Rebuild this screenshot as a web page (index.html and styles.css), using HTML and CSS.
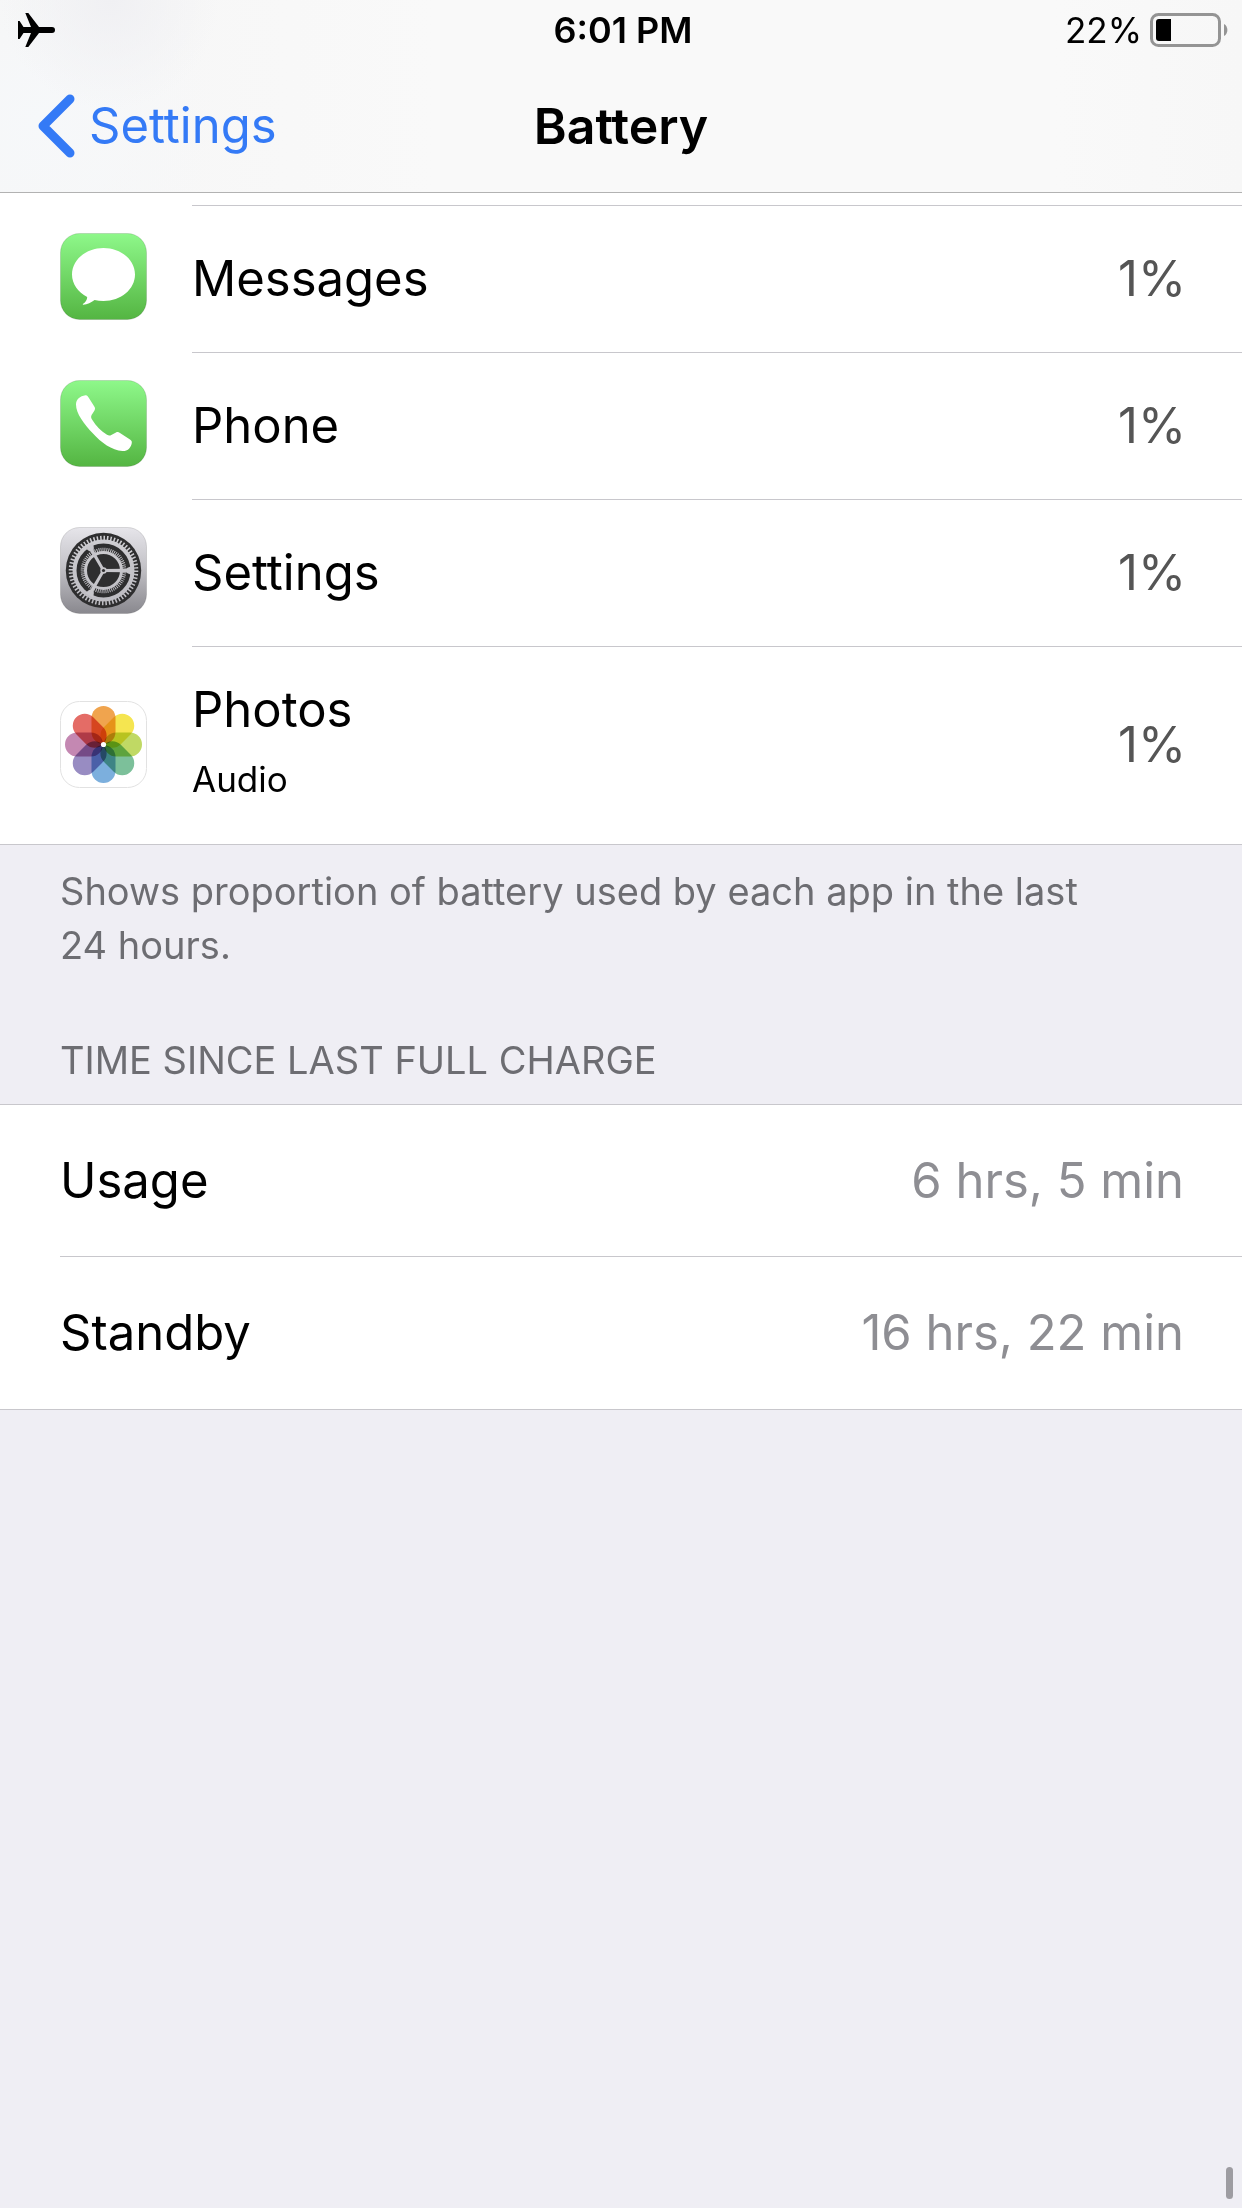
FILE: index.html
```
<!DOCTYPE html>
<html lang="en">
<head>
    <meta charset="UTF-8">
    <meta name="viewport" content="width=device-width, initial-scale=1.0">
    <title>Battery</title>
    <link rel="stylesheet" href="styles.css">
</head>
<body>
    <header class="top-bar">
        <div class="status-bar">
            <svg class="airplane" viewBox="0 0 37 34" aria-label="Airplane mode">
                <path d="M0 8H1.6L5.5 14H13L7.3 0H10.3L21 14H34A3 3 0 0 1 34 20H21L10.3 34H7.3L13 20H5.5L1.6 26H0Z"/>
            </svg>
            <span class="time">6:01 PM</span>
            <div class="power">
                <span>22%</span>
                <svg class="battery" viewBox="0 0 78 34" aria-hidden="true">
                    <rect x="1.5" y="1.5" width="68" height="31" rx="7" fill="none" stroke="#949494" stroke-width="3"/>
                    <path d="M9 6H21V28H9A3 3 0 0 1 6 25V9A3 3 0 0 1 9 6Z"/>
                    <path d="M74 11C78.5 13 78.5 21 74 23Z" fill="#949494"/>
                </svg>
            </div>
        </div>
        <nav class="nav-bar">
            <a class="back" href="#">
                <svg class="chevron" viewBox="0 0 38 64" aria-hidden="true">
                    <path d="M33 5L6 32L33 59" fill="none" stroke="#347af6" stroke-width="9" stroke-linecap="round" stroke-linejoin="round"/>
                </svg>
                Settings
            </a>
            <h1>Battery</h1>
        </nav>
    </header>

    <main>
        <ul class="list app-list">
            <li class="app">
                <svg class="app-icon" viewBox="0 0 87 87" aria-hidden="true">
                    <defs>
                        <linearGradient id="green" x1="0" y1="0" x2="0" y2="1">
                            <stop offset="0" stop-color="#8ef88a"/>
                            <stop offset="1" stop-color="#54b542"/>
                        </linearGradient>
                    </defs>
                    <rect x="0.5" y="0.5" width="86" height="86" rx="19" fill="url(#green)" stroke="#000" stroke-opacity="0.12"/>
                    <path d="M43.5 15C61 15 75 26.8 75 41.5S61 68 43.5 68C40.4 68 37.4 67.6 34.6 66.9C31 69.5 27.5 71.3 23.2 71.8C22.6 71.7 22.8 71.2 23.2 70.8C25.6 69 27.2 67 27.2 64C18 59.3 12 51 12 41.5C12 26.8 26 15 43.5 15Z" fill="#fff"/>
                </svg>
                <div class="row">
                    <span class="name">Messages</span>
                    <span class="percent">1%</span>
                </div>
            </li>
            <li class="app">
                <svg class="app-icon" viewBox="0 0 87 87" aria-hidden="true">
                    <rect x="0.5" y="0.5" width="86" height="86" rx="19" fill="url(#green)" stroke="#000" stroke-opacity="0.12"/>
                    <path d="M25.5 15.3C27 15 27.8 16.3 28.6 17.5L34.6 27C35.4 28.5 35 29.6 34.2 31L31.6 35C30.8 36.5 31 38 32.2 39.8C36 46 41 51 47 54.8C48.5 55.8 50 55.8 51.3 55L56 52.5C57.5 51.8 58.5 52 60 53L70 59.5C71.8 60.7 72.2 61.8 71.6 64C70 69 67.5 71.2 62.5 71C52 70.5 41 62.5 33 53.5C24 44 16 33.5 16 24.5C16 19.5 20 16 25.5 15.3Z" fill="#fff"/>
                </svg>
                <div class="row">
                    <span class="name">Phone</span>
                    <span class="percent">1%</span>
                </div>
            </li>
            <li class="app">
                <svg class="app-icon" viewBox="0 0 87 87" aria-hidden="true">
                    <defs>
                        <linearGradient id="metal" x1="0" y1="0" x2="0" y2="1">
                            <stop offset="0" stop-color="#e6e5ea"/>
                            <stop offset="0.45" stop-color="#c4c3c8"/>
                            <stop offset="1" stop-color="#89888e"/>
                        </linearGradient>
                        <linearGradient id="gear" gradientUnits="userSpaceOnUse" x1="0" y1="5" x2="0" y2="82">
                            <stop offset="0" stop-color="#d0cfd3"/>
                            <stop offset="1" stop-color="#bbbac0"/>
                        </linearGradient>
                    </defs>
                    <rect x="0.5" y="0.5" width="86" height="86" rx="19" fill="url(#metal)" stroke="#000" stroke-opacity="0.12"/>
                    <circle cx="43.5" cy="43.5" r="37.7" fill="#2e2e2f"/>
                    <g fill="none" stroke="url(#gear)">
                        <circle cx="43.5" cy="43.5" r="32.5" stroke-width="4.6" pathLength="120" stroke-dasharray="0.9 1.1"/>
                        <circle cx="43.5" cy="43.5" r="29" stroke-width="4"/>
                        <circle cx="43.5" cy="43.5" r="21" stroke-width="3.6" pathLength="132" stroke-dasharray="0.9 1.1"/>
                        <circle cx="43.5" cy="43.5" r="18" stroke-width="3"/>
                    </g>
                    <g fill="#c6c5ca">
                        <path id="spoke" d="M43.5 42.1L66 41.8L68 40.5L72 39V48L68 46.5L66 45.2L43.5 44.9Z"/>
                        <use href="#spoke" transform="rotate(120 43.5 43.5)"/>
                        <use href="#spoke" transform="rotate(240 43.5 43.5)"/>
                        <circle cx="43.5" cy="43.5" r="3.2"/>
                    </g>
                    <circle cx="43.5" cy="43.5" r="1.6" fill="#2e2e2f"/>
                </svg>
                <div class="row">
                    <span class="name">Settings</span>
                    <span class="percent">1%</span>
                </div>
            </li>
            <li class="app app-tall">
                <svg class="app-icon" viewBox="0 0 87 87" aria-hidden="true">
                    <rect x="0.5" y="0.5" width="86" height="86" rx="19" fill="#fff" stroke="#e2e2e2"/>
                    <g class="petals">
                        <rect x="31.5" y="5" width="24" height="38" rx="12" fill="#f0a44e"/>
                        <rect x="31.5" y="5" width="24" height="38" rx="12" fill="#f5e550" transform="rotate(45 43.5 43.5)"/>
                        <rect x="31.5" y="5" width="24" height="38" rx="12" fill="#c0d964" transform="rotate(90 43.5 43.5)"/>
                        <rect x="31.5" y="5" width="24" height="38" rx="12" fill="#7cc09a" transform="rotate(135 43.5 43.5)"/>
                        <rect x="31.5" y="5" width="24" height="38" rx="12" fill="#7cafdd" transform="rotate(180 43.5 43.5)"/>
                        <rect x="31.5" y="5" width="24" height="38" rx="12" fill="#988cc2" transform="rotate(225 43.5 43.5)"/>
                        <rect x="31.5" y="5" width="24" height="38" rx="12" fill="#c488b2" transform="rotate(270 43.5 43.5)"/>
                        <rect x="31.5" y="5" width="24" height="38" rx="12" fill="#e46c66" transform="rotate(315 43.5 43.5)"/>
                    </g>
                    <circle cx="43.5" cy="43.5" r="2.6" fill="#fff"/>
                </svg>
                <div class="row">
                    <div class="name">
                        Photos
                        <small>Audio</small>
                    </div>
                    <span class="percent">1%</span>
                </div>
            </li>
        </ul>
        <p class="note">Shows proportion of battery used by each app in the last 24&nbsp;hours.</p>

        <h2>TIME SINCE LAST FULL CHARGE</h2>
        <ul class="list charge-list">
            <li class="row">
                <span class="name">Usage</span>
                <span class="value">6 hrs, 5 min</span>
            </li>
            <li class="row">
                <span class="name">Standby</span>
                <span class="value">16 hrs, 22 min</span>
            </li>
        </ul>
    </main>
    <div class="scroll-thumb"></div>
</body>
</html>
```
FILE: styles.css
```
* {
    box-sizing: border-box;
}
body {
    margin: 0;
    min-height: 100vh;
    background: #efeef4;
    color: #000;
    font-family: Inter, "Liberation Sans", sans-serif;
    font-size: 49px;
    line-height: 60px;
}
svg {
    display: block;
    flex-shrink: 0;
}

/* Top bar */
.top-bar {
    border-bottom: 1px solid #b2b2b2;
    background:
        radial-gradient(circle at 110px 0, #f0f0f3, rgba(240, 240, 243, 0) 110px),
        radial-gradient(circle at 40px 120px, #f6f8fa, rgba(246, 248, 250, 0) 180px),
        linear-gradient(to right, #f6f6f6, #f9f9f9 35%, #f9f9f9 85%, #f7f7f7);
}
.status-bar {
    display: grid;
    grid-template-columns: 1fr auto 1fr;
    align-items: center;
    height: 60px;
    padding: 0 14px 0 18px;
    font-size: 35px;
}
.airplane {
    width: 37px;
    height: 34px;
}
.time {
    font-size: 36px;
    font-weight: 600;
}
.power {
    display: flex;
    justify-content: flex-end;
    align-items: center;
    gap: 8px;
}
.battery {
    width: 78px;
    height: 34px;
}
.nav-bar {
    display: grid;
    grid-template-columns: 1fr auto 1fr;
    align-items: center;
    height: 132px;
    padding: 0 37px;
}
.back {
    display: flex;
    align-items: center;
    gap: 14px;
    color: #347af6;
    text-decoration: none;
}
.chevron {
    width: 38px;
    height: 64px;
}
h1 {
    margin: 0;
    font-size: 50px;
    font-weight: 600;
}

/* Lists */
.list {
    list-style: none;
    margin: 0;
    background: #fff;
    border-bottom: 1px solid #c8c7cc;
}
.app-list {
    padding: 12px 0 0 60px;
}
.app {
    display: flex;
    align-items: center;
}
.app-icon {
    width: 87px;
    height: 87px;
    margin: 0 45px 4px 0;
}
.petals {
    isolation: isolate;
}
.petals rect {
    mix-blend-mode: multiply;
}
.row {
    flex: 1;
    display: flex;
    justify-content: space-between;
    align-items: center;
    min-height: 147px;
    padding-right: 56px;
    border-top: 1px solid #c8c7cc;
}
.app-tall .app-icon {
    margin-bottom: 2px;
}
.app-tall .row {
    min-height: 198px;
    padding-bottom: 2px;
}
.app-tall .name {
    padding-bottom: 8px;
}
.name small {
    display: block;
    margin-top: 17px;
    font-size: 35px;
    line-height: 44px;
}
.percent {
    color: #555;
}
.note {
    margin: 0;
    padding: 19px 120px 0 60px;
    color: #6d6d72;
    font-size: 38px;
    line-height: 54px;
}
h2 {
    margin: 0;
    padding: 61px 60px 17px;
    color: #6d6d72;
    font-size: 38px;
    font-weight: 400;
    line-height: 54px;
}
.charge-list {
    padding-left: 60px;
    border-top: 1px solid #c8c7cc;
}
.charge-list .row {
    min-height: 153px;
    padding-right: 58px;
}
.charge-list .row:first-child {
    min-height: 151px;
    border-top: none;
}
.value {
    color: #8e8e93;
}

.scroll-thumb {
    position: fixed;
    right: 9px;
    bottom: 9px;
    width: 7px;
    height: 32px;
    border-radius: 4px;
    background: #9d9ca1;
}
```
